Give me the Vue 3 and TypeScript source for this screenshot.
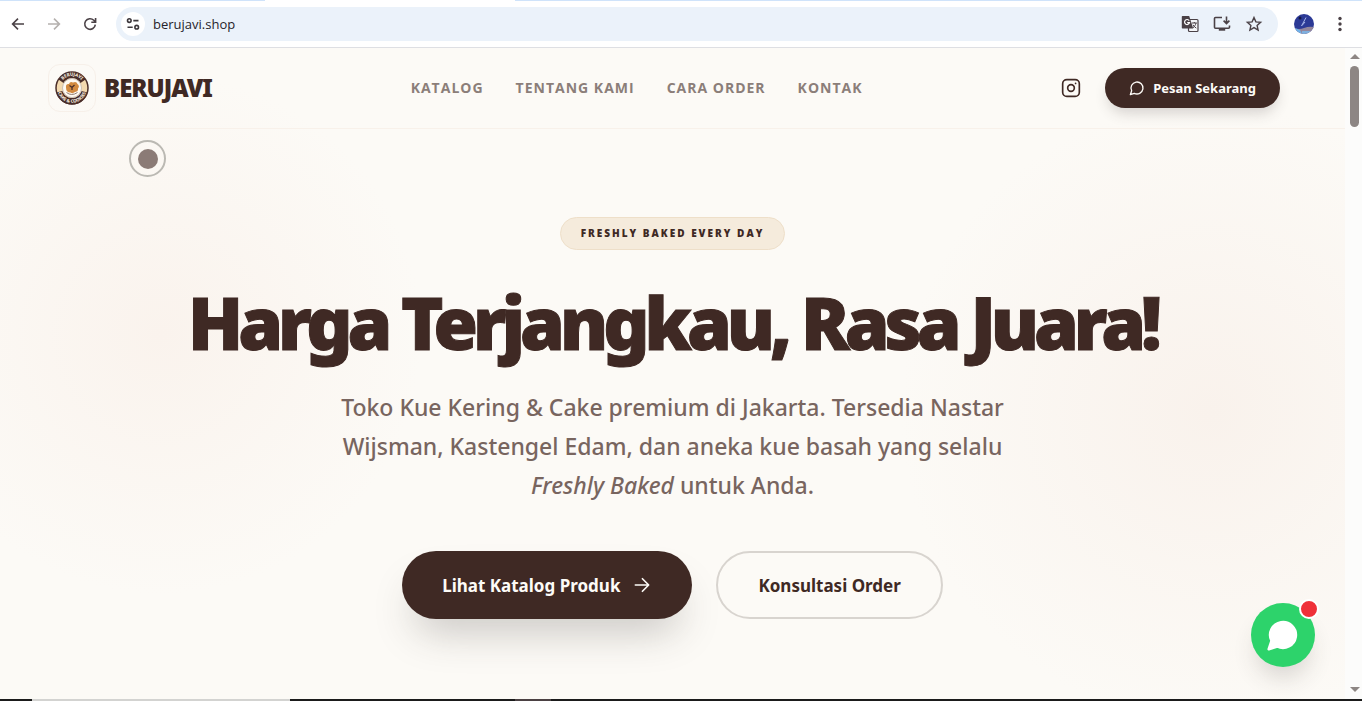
<script setup lang="ts">
interface NavLink {
  label: string
  href: string
}

const links: NavLink[] = [
  { label: 'Katalog', href: '#katalog' },
  { label: 'Tentang Kami', href: '#tentang' },
  { label: 'Cara Order', href: '#order' },
  { label: 'Kontak', href: '#kontak' },
]
</script>

<template>
  <div class="window">
    <div class="tabstrip"><span class="active-tab"></span></div>
    <div class="toolbar">
      <button class="tool" type="button" aria-label="Back">
        <svg width="16" height="16" viewBox="0 0 16 16"><path d="M14 8H2.800M8 2.600 2.600 8 8 13.400" /></svg>
      </button>
      <button class="tool muted" type="button" aria-label="Forward">
        <svg width="16" height="16" viewBox="0 0 16 16"><path d="M2 8h11.200M8 2.600 13.400 8 8 13.400" /></svg>
      </button>
      <button class="tool" type="button" aria-label="Reload">
        <svg width="16" height="16" viewBox="0 0 16 16"><path d="M13.300 8.600A5.300 5.300 0 1 1 11.800 4.300L13.500 6M13.600 2v4.300H9.300" /></svg>
      </button>
      <div class="omnibox">
        <button class="site-info" type="button" aria-label="Site information">
          <svg width="16" height="16" viewBox="0 0 16 16">
            <circle cx="4.300" cy="4.600" r="1.800" /><path d="M8.300 4.600h5.200M2.500 11.200h5.200" /><circle cx="11.700" cy="11.200" r="1.800" />
          </svg>
        </button>
        <input class="url" type="text" value="berujavi.shop" aria-label="Address" />
        <button class="tool" type="button" aria-label="Translate">
          <svg width="18" height="18" viewBox="0 0 18 18">
            <rect x="7.500" y="4.500" width="9.500" height="12" rx="1" fill="#f4f6f8" stroke-width="1.200" />
            <path d="M1.500 1h6.700l4 12.500H1.500A.8.8 0 0 1 .8 12.700V1.800A.8.8 0 0 1 1.500 1z" fill="#4a4146" stroke="none" />
            <path d="M8.200 5.700A2.500 2.500 0 1 0 8.500 7.600H6.200" stroke="#fff" stroke-width="1.200" />
            <path d="M10.800 8h5M13.300 7v1M15 8c-.4 2-1.600 3.600-3 4.800M12 9.800c.8 1.400 2 2.500 3.300 3.300" stroke-width="1" />
          </svg>
        </button>
        <button class="tool" type="button" aria-label="Install app">
          <svg width="18" height="18" viewBox="0 0 18 18">
            <path d="M9 2.500H2.500a1 1 0 0 0-1 1v8.700a1 1 0 0 0 1 1h13a1 1 0 0 0 1-1V10.500M13.500 1.500v6.600M10.600 5.600l2.900 2.900 2.900-2.900" />
            <path d="M5.800 13.500h6.400v2.200H5.800z" fill="#4a4146" stroke="none" />
          </svg>
        </button>
        <button class="tool" type="button" aria-label="Bookmark">
          <svg width="18" height="18" viewBox="0 0 18 18"><path d="M9 2.600l1.900 4.300 4.700.4-3.500 3.100 1 4.600L9 12.600 4.900 15l1-4.600L2.400 7.300l4.700-.4z" stroke-width="1.400" /></svg>
        </button>
      </div>
      <button class="tool avatar" type="button" aria-label="Profile">
        <svg width="20" height="20" viewBox="0 0 20 20">
          <clipPath id="avatar-clip"><circle cx="10" cy="10" r="10" /></clipPath>
          <g clip-path="url(#avatar-clip)" stroke="none">
            <path d="M0 0h20v20H0z" fill="#2c3a96" />
            <path d="M0 14q5 2 10 0t10-1v7H0z" fill="#93869c" />
            <path d="M1 14l5 2 2 4H2z" fill="#6fb2ea" />
            <path d="M8 17h8v3H8z" fill="#7fb0df" />
            <circle cx="6" cy="4" r="1.500" fill="#131842" />
            <path d="M12 3.500 7.500 12M8 11.500l3-3.500" stroke="#a9b6ea" stroke-width="1" />
          </g>
        </svg>
      </button>
      <button class="tool" type="button" aria-label="Menu">
        <svg width="16" height="16" viewBox="0 0 16 16"><g fill="#4a4146" stroke="none"><circle cx="8" cy="2.500" r="1.700" /><circle cx="8" cy="8" r="1.700" /><circle cx="8" cy="13.500" r="1.700" /></g></svg>
      </button>
    </div>

    <div class="viewport">
      <div class="page">
        <header class="header">
          <a class="brand" href="#top">
            <span class="logo">
              <svg width="34" height="34" viewBox="0 0 68 68" aria-hidden="true">
                <defs>
                  <path id="ring-top" d="M9.500 34a24.500 24.500 0 0 1 49 0" />
                  <path id="ring-bottom" d="M4.500 34a29.500 29.500 0 0 0 59 0" />
                </defs>
                <circle cx="34" cy="34" r="32" fill="#f3d9ae" stroke="#4a2e29" stroke-width="3" />
                <path d="M7 17A32 32 0 0 1 61 17L51 24A20 20 0 0 0 17 24z" fill="#4a2e29" />
                <path d="M3 43A32 32 0 0 0 65 43L53 40A20 20 0 0 1 15 40z" fill="#4a2e29" />
                <circle cx="34" cy="34" r="19" fill="#fffaf2" stroke="#c9bfb5" stroke-width="2" />
                <path d="M22 33q-1-8 6-7 2-6 8-3 7-3 9 3 5 4 1 9 1 6-6 7-5 4-9 1-9 0-9-10z" fill="#d28a40" />
                <path d="M29 29l5 4 5-5M34 33v5" fill="none" stroke="#4a2e29" stroke-width="2.500" />
                <path d="M23 43q10 8 22 0" fill="none" stroke="#8f7d73" stroke-width="2" />
                <text class="seal"><textPath href="#ring-top" startOffset="50%">BERUJAVI</textPath></text>
                <text class="seal"><textPath href="#ring-bottom" startOffset="50%">CAKE &amp; COOKIES</textPath></text>
              </svg>
            </span>
            <span class="brand-name">BERUJAVI</span>
          </a>
          <nav class="nav">
            <a v-for="link in links" :key="link.label" :href="link.href">{{ link.label }}</a>
          </nav>
          <div class="actions">
            <a class="insta" href="#instagram" aria-label="Instagram">
              <svg width="20" height="20" viewBox="0 0 24 24" stroke-width="2"><rect x="2" y="2" width="20" height="20" rx="5" /><circle cx="12" cy="12" r="4" /><path d="M17.500 6.500h.01" stroke-linecap="round" /></svg>
            </a>
            <button class="order" type="button">
              <svg width="16" height="16" viewBox="0 0 24 24" stroke-width="2"><path d="M7.900 20A9 9 0 1 0 4 16.100L2 22z" stroke-linejoin="round" /></svg>
              Pesan Sekarang
            </button>
          </div>
        </header>

        <main class="hero">
          <span class="badge">Freshly Baked Every Day</span>
          <h1>Harga Terjangkau, Rasa Juara!</h1>
          <p>
            Toko Kue Kering &amp; Cake premium di Jakarta. Tersedia Nastar Wijsman, Kastengel Edam, dan aneka kue
            basah yang selalu <em>Freshly Baked</em> untuk Anda.
          </p>
          <div class="cta">
            <button class="primary" type="button">
              Lihat Katalog Produk
              <svg width="20" height="20" viewBox="0 0 24 24" stroke-width="2"><path d="M4 12h16M12.500 4.500 20 12l-7.500 7.500" stroke-linecap="round" stroke-linejoin="round" /></svg>
            </button>
            <button class="secondary" type="button">Konsultasi Order</button>
          </div>
        </main>

        <span class="pointer"></span>
        <button class="chat" type="button" aria-label="Chat">
          <svg width="34" height="34" viewBox="0 0 24 24"><path d="M7.900 20A9 9 0 1 0 4 16.100L2 22z" fill="#fff" stroke="#fff" stroke-width="2" stroke-linejoin="round" /></svg>
          <span class="alert"></span>
        </button>
      </div>
      <div class="scrollbar">
        <span class="arrow up"></span>
        <span class="thumb"></span>
        <span class="arrow down"></span>
      </div>
    </div>
    <div class="taskbar"><span class="search"></span><span class="task"></span></div>
  </div>
</template>

<style>
body {
  margin: 0;
}
</style>

<style scoped>
.window {
  display: flex;
  flex-direction: column;
  min-height: 100vh;
  box-sizing: border-box;
  font-family: "Noto Sans", "Open Sans", sans-serif;
  color: #3f2924;
  background: #fff;
}

button {
  font: inherit;
  margin: 0;
  padding: 0;
  border: 0;
  background: none;
  cursor: pointer;
}

a {
  color: inherit;
  text-decoration: none;
}

svg {
  display: block;
  fill: none;
  stroke: currentColor;
}

.tabstrip {
  display: flex;
  height: 1px;
  padding-left: 265px;
  background: #cfe3fa;
}

.active-tab {
  width: 250px;
  background: #fff;
}

.toolbar {
  display: flex;
  align-items: center;
  height: 46px;
  padding: 0 14px 0 10px;
  border-bottom: 1px solid #dedfe3;
  color: #4a4146;
}

.tool {
  color: inherit;
}

.tool svg {
  stroke-width: 1.6;
}

.toolbar > .tool {
  margin-right: 20px;
}

.toolbar > .muted {
  color: #b5b1ae;
}

.toolbar > .tool:last-child {
  margin-right: 0;
}

.toolbar > .avatar {
  margin: 0 18px 0 16px;
}

.omnibox {
  display: flex;
  flex: 1;
  align-items: center;
  gap: 14px;
  height: 34px;
  margin-left: -2px;
  padding: 0 15px 0 5px;
  border-radius: 17px;
  background: #ebf2fa;
}

.site-info {
  display: grid;
  place-items: center;
  width: 24px;
  height: 24px;
  border-radius: 50%;
  background: #fff;
  color: #3c383c;
}

.site-info svg {
  stroke-width: 1.6;
}

.url {
  flex: 1;
  min-width: 0;
  margin-left: -6px;
  padding: 0;
  border: 0;
  outline: 0;
  background: none;
  font: 400 13px/20px "Open Sans", "Noto Sans", sans-serif;
  color: #26232a;
}

.viewport {
  display: flex;
  flex: 1;
}

.page {
  position: relative;
  flex: 1;
  background:
    radial-gradient(circle at 12% 44%, #faf3ed 0, #faf3ed00 260px),
    radial-gradient(circle at 90% 56%, #f9f2ec 0, #f9f2ec00 310px),
    #fcfaf6;
}

.header {
  display: flex;
  align-items: center;
  justify-content: space-between;
  height: 80px;
  padding: 0 65px 0 48px;
  border-bottom: 1px solid #f8f1ea;
}

.brand {
  display: flex;
  align-items: center;
  gap: 8px;
}

.logo {
  display: grid;
  place-items: center;
  width: 46px;
  height: 46px;
  border: 1px solid #f7f0e9;
  border-radius: 12px;
}

.logo svg {
  stroke: none;
}

.seal {
  font-size: 9px;
  font-weight: 700;
  fill: #fff6e6;
  text-anchor: middle;
}

.brand-name {
  font-size: 24px;
  font-weight: 900;
  line-height: 32px;
  letter-spacing: -1px;
}

.nav {
  display: flex;
  gap: 32px;
  font-family: "Open Sans", "Noto Sans", sans-serif;
  font-size: 14px;
  font-weight: 700;
  line-height: 20px;
  letter-spacing: 1px;
  text-transform: uppercase;
  color: #8b7e79;
}

.actions {
  display: flex;
  align-items: center;
  gap: 24px;
}

.order {
  display: flex;
  align-items: center;
  gap: 8px;
  height: 40px;
  padding: 0 24px;
  border-radius: 20px;
  background: #3f2924;
  box-shadow: 0 8px 14px -3px #3a343033;
  color: #fdfbf7;
  font-size: 13px;
  font-weight: 700;
}

.hero {
  display: flex;
  flex-direction: column;
  align-items: center;
  padding: 88px 24px 76px;
  text-align: center;
}

.badge {
  padding: 8px 20px;
  border: 1px solid #eedfc9;
  border-radius: 20px;
  background: #f5ebdc;
  font-family: "Open Sans", "Noto Sans", sans-serif;
  font-size: 10px;
  font-weight: 800;
  line-height: 15px;
  letter-spacing: 2px;
  text-transform: uppercase;
}

h1 {
  margin: 32px 0 26px;
  font-size: 72px;
  font-weight: 900;
  line-height: 80px;
  letter-spacing: -5px;
  -webkit-text-stroke: 1px currentColor;
}

p {
  max-width: 672px;
  margin: 0;
  font-size: 23px;
  font-weight: 500;
  line-height: 39px;
  color: #78655f;
}

.cta {
  display: flex;
  gap: 24px;
  margin-top: 46px;
  font-size: 17px;
  font-weight: 700;
}

.primary,
.secondary {
  display: flex;
  align-items: center;
  gap: 12px;
  height: 68px;
  padding: 0 40px;
  border-radius: 34px;
}

.primary {
  background: #3f2924;
  box-shadow: 0 24px 40px -12px #3a343044;
  color: #fdfbf7;
}

.secondary {
  border: 2px solid #d8d4cf;
  color: #3f2924;
}

.pointer {
  position: absolute;
  top: 92px;
  left: 129px;
  display: grid;
  place-items: center;
  width: 33px;
  height: 33px;
  border: 2px solid #bbb9b3;
  border-radius: 50%;
}

.pointer::before {
  content: "";
  width: 20px;
  height: 20px;
  border-radius: 50%;
  background: #8b7b76;
}

.chat {
  position: absolute;
  right: 30px;
  bottom: 32px;
  display: grid;
  place-items: center;
  width: 64px;
  height: 64px;
  border-radius: 50%;
  background: #2dd36b;
  box-shadow: 0 16px 24px -6px #3a343030;
}

.alert {
  position: absolute;
  top: -4px;
  right: -4px;
  width: 16px;
  height: 16px;
  border: 2px solid #fff;
  border-radius: 50%;
  background: #ef3038;
}

.scrollbar {
  display: flex;
  flex-direction: column;
  align-items: center;
  width: 15px;
  padding: 6px 0 7px 2px;
  background: #fcfcfb;
}

.arrow {
  border: 5px solid transparent;
}

.up {
  border-top: 0;
  border-bottom-color: #8d8684;
}

.down {
  margin-top: auto;
  border-bottom: 0;
  border-top-color: #8d8684;
}

.thumb {
  width: 9px;
  height: 61px;
  margin-top: 7px;
  border-radius: 5px;
  background: #8d8684;
}

.taskbar {
  display: flex;
  height: 2px;
  padding-left: 32px;
  background: #1b1b1b;
}

.search {
  width: 258px;
  background: #d3d3d1;
}

.task {
  width: 36px;
  margin-left: 225px;
  background: #4b4143;
}
</style>
